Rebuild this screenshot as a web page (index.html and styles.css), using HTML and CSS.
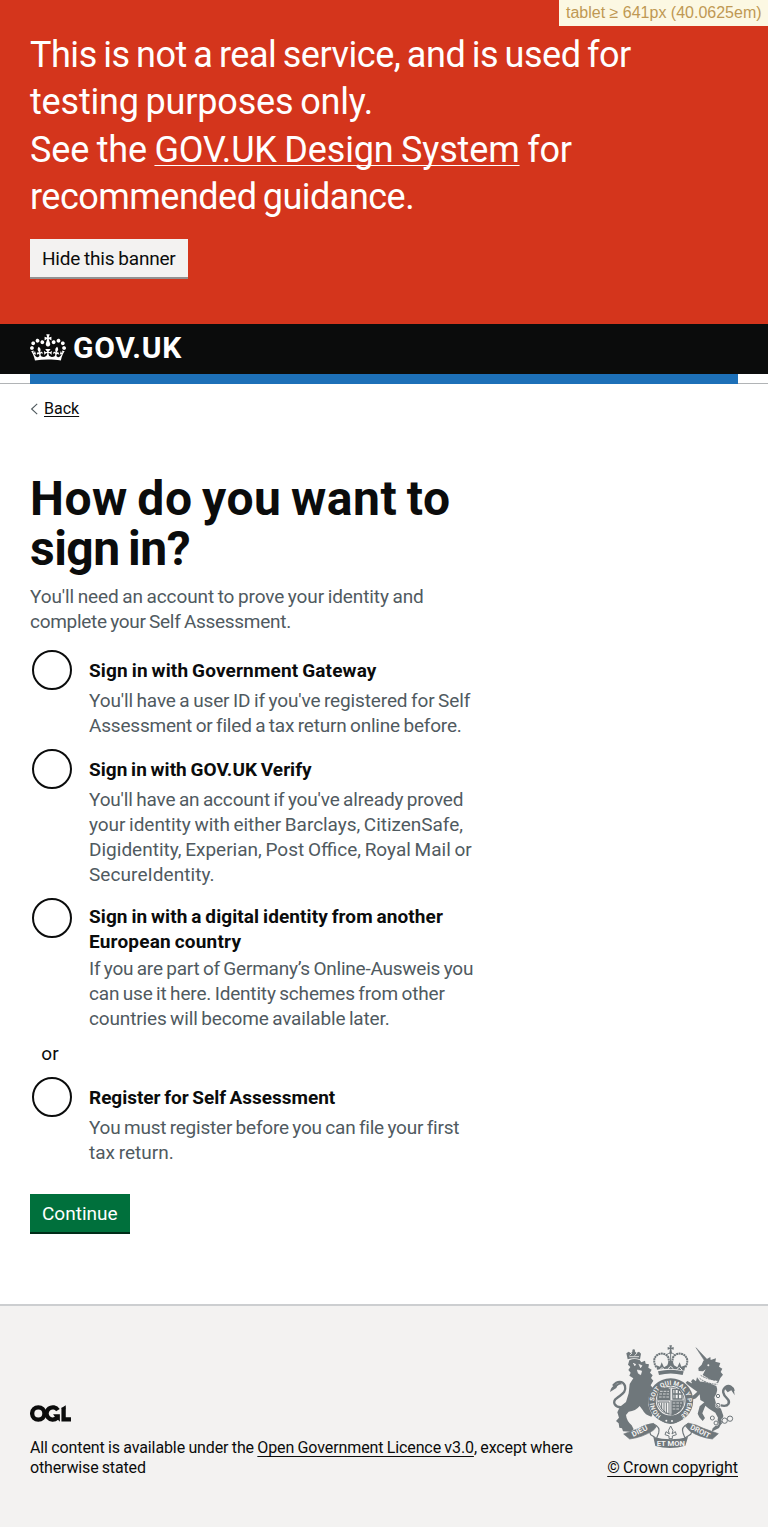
FILE: index.html
```
<!DOCTYPE html>
<html lang="en">
<head>
<meta charset="utf-8">
<title>How do you want to sign in?</title>
<link rel="stylesheet" href="styles.css">
</head>
<body>
<div class="breakpoint">tablet ≥ 641px (40.0625em)</div>
<section class="banner">
  <p class="banner-text"><span class="ln b1">This is not a real service, and is used for</span> <span class="ln b2">testing purposes only.</span> <span class="ln b3">See the <a href="#">GOV.UK Design System</a> for</span> <span class="ln b4">recommended guidance.</span></p>
  <button class="button button-secondary">Hide this banner</button>
</section>
<header class="header">
  <a class="logo" href="#">
    <svg class="crown" viewBox="0 0 132 97" width="36" height="27" aria-hidden="true"><path fill="currentColor" d="M25 30.2c3.5 1.5 7.7-.2 9.1-3.7 1.5-3.6-.2-7.8-3.9-9.2-3.6-1.4-7.6.3-9.1 3.9-1.4 3.5.3 7.5 3.9 9zM9 39.5c3.6 1.5 7.8-.2 9.2-3.7 1.5-3.6-.2-7.8-3.9-9.1-3.6-1.5-7.6.2-9.1 3.8-1.4 3.5.3 7.5 3.8 9zM4.4 57.2c3.5 1.5 7.7-.2 9.1-3.8 1.5-3.6-.2-7.7-3.9-9.1-3.5-1.5-7.6.3-9.1 3.8-1.4 3.5.3 7.6 3.9 9.1zm38.3-21.4c3.5 1.5 7.7-.2 9.1-3.8 1.5-3.6-.2-7.7-3.9-9.1-3.6-1.5-7.6.3-9.1 3.8-1.3 3.6.4 7.7 3.9 9.1zm64.4-5.6c-3.6 1.5-7.8-.2-9.1-3.7-1.5-3.6.2-7.8 3.8-9.2 3.6-1.4 7.7.3 9.2 3.9 1.3 3.5-.4 7.5-3.9 9zm15.9 9.3c-3.6 1.5-7.7-.2-9.1-3.7-1.5-3.6.2-7.8 3.7-9.1 3.6-1.5 7.7.2 9.2 3.8 1.5 3.5-.3 7.5-3.8 9zm4.7 17.7c-3.6 1.5-7.8-.2-9.2-3.8-1.5-3.6.2-7.7 3.9-9.1 3.6-1.5 7.7.3 9.2 3.8 1.3 3.5-.4 7.6-3.9 9.1zM89.3 35.8c-3.6 1.5-7.8-.2-9.2-3.8-1.4-3.6.2-7.7 3.9-9.1 3.6-1.5 7.7.3 9.2 3.8 1.4 3.6-.3 7.7-3.9 9.1zM69.7 17.7l8.9 4.7V9.3l-8.9 2.8c-.2-.3-.5-.6-.9-.9L72.4 0H59.6l3.5 11.2c-.3.3-.6.5-.9.9l-8.8-2.8v13.1l8.8-4.7c.3.3.6.7.9.9l-5 15.4v.1c-.2.8-.4 1.6-.4 2.4 0 4.1 3.1 7.5 7 8.1h.2c.3 0 .7.1 1 .1.4 0 .7 0 1-.1h.2c4-.6 7.1-4.1 7.1-8.1 0-.8-.1-1.7-.4-2.4V34l-5.1-15.4c.4-.2.7-.6 1-.9zM66 92.8c16.9 0 32.8 1.1 47.1 3.2 4-16.9 8.9-26.7 14-33.5l-9.6-3.4c1 4.9 1.1 7.2 0 10.2-1.5-1.4-3-4.3-4.2-8.7L108.6 76c2.8-2 5-3.2 7.5-3.3-4.4 9.4-10 11.9-13.6 11.2-4.3-.8-6.3-4.6-5.6-7.9 1-4.7 5.7-5.9 8-.5 4.3-8.7-3-11.4-7.6-8.8 7.1-7.2 7.9-13.5 2.1-21.1-8 6.1-8.1 12.3-4.5 20.8-4.7-5.4-12.1-2.5-9.5 6.2 3.4-5.2 7.9-2 7.2 3.1-.6 4.3-6.4 7.8-13.5 7.2-10.3-.9-10.9-8-11.2-13.8 2.5-.5 7.1 1.8 11 7.3L80.2 60c-4.1 4.4-8 5.3-12.3 5.4 1.4-4.4 8-11.6 8-11.6H55.5s6.4 7.2 7.9 11.6c-4.2-.1-8-1-12.3-5.4l1.4 16.4c3.9-5.5 8.5-7.7 10.9-7.3-.3 5.8-.9 12.8-11.1 13.8-7.2.6-12.9-2.9-13.5-7.2-.7-5 3.8-8.3 7.1-3.1 2.7-8.7-4.6-11.6-9.4-6.2 3.7-8.5 3.6-14.7-4.6-20.8-5.8 7.6-5 13.9 2.2 21.1-4.7-2.6-11.9.1-7.7 8.8 2.3-5.5 7.1-4.2 8.1.5.7 3.3-1.3 7.1-5.7 7.9-3.5.7-9-1.8-13.5-11.2 2.5.1 4.7 1.3 7.5 3.3l-4.7-15.4c-1.2 4.4-2.7 7.2-4.3 8.7-1.1-3-.9-5.3 0-10.2l-9.5 3.4c5 6.9 9.9 16.7 14 33.5 14.8-2.1 30.8-3.2 47.7-3.2z"/></svg>
    <span class="wordmark">GOV.UK</span>
  </a>
</header>
<div class="blue-rule"></div>
<main class="main">
  <a class="back" href="#"><svg width="8" height="12" viewBox="0 0 8 12" aria-hidden="true"><path d="M7.2 .8 1.6 6 7.2 11.2" fill="none" stroke="#505a5f" stroke-width="1.1"/></svg><span>Back</span></a>
  <form class="form">
    <h1 class="title"><span class="ln h1">How do you want to</span> <span class="ln h2">sign in?</span></h1>
    <p class="hint intro"><span class="ln i1">You'll need an account to prove your identity and</span> <span class="ln i2">complete your Self Assessment.</span></p>
    <div class="radio r1"><i class="dot"></i><div class="radio-body"><b class="label"><span class="ln l1">Sign in with Government Gateway</span></b>
      <p class="hint"><span class="ln a1">You'll have a user ID if you've registered for Self</span> <span class="ln a2">Assessment or filed a tax return online before.</span></p></div></div>
    <div class="radio r2"><i class="dot"></i><div class="radio-body"><b class="label"><span class="ln l2">Sign in with GOV.UK Verify</span></b>
      <p class="hint"><span class="ln a3">You'll have an account if you've already proved</span> <span class="ln a4">your identity with either Barclays, CitizenSafe,</span> <span class="ln a5">Digidentity, Experian, Post Office, Royal Mail or</span> <span class="ln a6">SecureIdentity.</span></p></div></div>
    <div class="radio r3"><i class="dot"></i><div class="radio-body"><b class="label"><span class="ln l3">Sign in with a digital identity from another</span> <span class="ln l4">European country</span></b>
      <p class="hint"><span class="ln a7">If you are part of Germany’s Online-Ausweis you</span> <span class="ln a8">can use it here. Identity schemes from other</span> <span class="ln a9">countries will become available later.</span></p></div></div>
    <div class="divider">or</div>
    <div class="radio r4"><i class="dot"></i><div class="radio-body"><b class="label"><span class="ln l5">Register for Self Assessment</span></b>
      <p class="hint"><span class="ln a10">You must register before you can file your first</span> <span class="ln a11">tax return.</span></p></div></div>
    <button class="button button-primary" type="button">Continue</button>
  </form>
</main>
<footer class="footer">
  <div class="licence">
    <svg class="ogl" viewBox="0 0 483.2 195.7" width="41" height="17" aria-hidden="true"><g fill="none" stroke="#0b0c0c" stroke-width="51"><circle cx="97.8" cy="97.8" r="72.5"/><path d="M329 59A72.500 72.500 0 1 0 318 150"/><path d="M396 30V168H483"/></g><path fill="#0b0c0c" d="M272 106h80v87h-3l-58-60zM370.500 34l51-34v40h-51z"/></svg>
    <p class="licence-text"><span class="ln f1">All content is available under the <a href="#">Open Government Licence v3.0</a>, except where</span> <span class="ln f2">otherwise stated</span></p>
  </div>
  <a class="copyright" href="#">
    <svg class="crest" viewBox="54 27 384 315" width="128" height="105" aria-hidden="true">
      <defs><path id="garter" d="M215 242A50 50 0 1 1 270 242"/></defs>
      <!-- lion -->
      <g fill="#6f777b">
        <path d="M113 73 109 55 116 50 123 55 131 45 139 54 147 50 153 56 150 73Q132 67 113 73z"/>
        <path d="M118 76Q132 69 149 75L154 82 165 77 167 86 177 88 175 98 185 104 180 113 188 121 183 129 190 137 182 151 190 161 187 176Q170 197 177 216L189 236 184 245Q165 240 158 225L149 213Q137 228 116 230L108 240Q110 258 125 271L131 283 121 290 99 289 96 280 88 278 86 265 78 258 87 248 82 232 90 215 108 201 116 175 119 147 130 130 118 122 122 113 115 105 121 96 114 89z"/>
        <path d="M188 170 197 185 190 197 199 205 183 213 170 200z"/>
      </g>
      <path d="M101 216C73 221 65 199 80 190 94 178 110 173 105 153 99 136 81 137 69 152" fill="none" stroke="#6f777b" stroke-width="7"/>
      <path d="M60 171Q61 154 82 146 93 140 96 148 83 148 79 159 72 164 60 171z" fill="#6f777b"/>
      <path d="M129 85 137 88 134 93M146 88 156 92 151 99M142 105 155 108 152 119 145 115z" fill="#f3f2f1" stroke="#f3f2f1" stroke-width="2"/>
      <path d="M118 65h29M119 61l7-7M134 62l7-8" stroke="#f3f2f1" stroke-width="2.500"/>
      <circle cx="131" cy="47" r="4" fill="#6f777b"/>
      <!-- unicorn -->
      <g fill="#6f777b">
        <path d="M318 38 351 73 344 78z" stroke="#6f777b" stroke-width="1.500"/>
        <path d="M352 71 361 66 362 75 378 70 376 80 391 84 387 95 397 101 392 111 399 119 391 129 384 145Q361 134 338 120L347 103 339 109 326 108 325 99 335 89 340 77z"/>
        <path d="M321 140Q340 137 379 153 386 168 373 187L378 205 393 222 400 242 396 262 387 279 365 290 368 280 380 269 384 248 376 233 357 221 346 212 337 235 345 249 338 258 328 247 323 236 329 214 343 202 331 195 329 178 321 185 312 179 322 170 311 163 294 150 287 143 292 138 305 145z"/>
        <path d="M303 139 309 132 318 139 321 127 330 139 324 154 311 153zM311 180 303 185 298 194 305 195 318 190 329 177z"/>
      </g>
      <path d="M392 211C418 217 422 200 411 190 398 178 395 165 407 156 417 149 428 155 431 168" fill="none" stroke="#6f777b" stroke-width="7"/>
      <path d="M403 160Q415 143 431 160L434 181 424 166 413 172z" fill="#6f777b"/>
      <path d="M332 124Q353 138 382 139" fill="none" stroke="#f3f2f1" stroke-width="5"/>
      <path d="M332 121Q353 134 382 136M329 130Q350 147 382 148" fill="none" stroke="#6f777b" stroke-width="3" stroke-dasharray="6 2"/>
      <circle cx="355" cy="91" r="3" fill="#f3f2f1"/>
      <g fill="none" stroke="#f3f2f1" stroke-width="5"><circle cx="384" cy="211" r="6"/><circle cx="367" cy="249" r="6"/><circle cx="378" cy="264" r="6"/><circle cx="404" cy="257" r="8"/></g>
      <g fill="none" stroke="#6f777b" stroke-width="3"><circle cx="384" cy="183" r="5"/><circle cx="384" cy="211" r="6"/><circle cx="367" cy="249" r="6"/><circle cx="378" cy="264" r="6"/><circle cx="404" cy="257" r="8"/><circle cx="420" cy="251" r="8"/><circle cx="391" cy="262" r="5"/></g>
      <!-- crown -->
      <g fill="#6f777b">
        <path d="M238 31h8l-2 7 7-2v8l-7-2 2 13h-8l2-13-7 2v-8l7 2z"/>
        <path d="M201 104 199 91 210 95 215 82 222 97 232 91 235 82 242 74 249 82 252 91 262 97 269 82 274 95 286 91 283 107Q242 97 201 104z"/>
        <path d="M204 109Q242 99 281 109L278 120Q242 111 207 120z"/>
      </g>
      <g fill="none" stroke="#6f777b" stroke-width="6" stroke-dasharray="6 1.500"><path d="M199 97C177 62 218 42 235 67L238 83M286 97C307 62 266 42 249 67L246 83"/></g>
      <path d="M242 52v29M230 59Q242 49 254 59M207 114Q242 105 278 114" fill="none" stroke="#6f777b" stroke-width="3"/>
      <path d="M208 105l8-7 8 6M260 104l8-7 8 8M234 101l8-7 8 7" fill="none" stroke="#f3f2f1" stroke-width="3"/>
      <!-- shield and garter -->
      <circle cx="242" cy="200" r="67" fill="#f3f2f1"/>
      <circle cx="242" cy="197" r="56" fill="none" stroke="#6f777b" stroke-width="23"/>
      <circle cx="242" cy="197" r="41" fill="#f3f2f1" stroke="#6f777b" stroke-width="2.500"/>
      <path d="M208 163Q224 153 240 161V195H203V178zM244 195H281Q281 216 270 228 257 239 244 242z" fill="#6f777b"/>
      <path d="M210 169h27M208 177h29M207 186h30M248 204h28M248 213h25M248 222h20" stroke="#d2d4d4" stroke-width="3" stroke-dasharray="8 3"/>
      <path d="M248 163h20l8 12v17h-27zM255 164v26M265 164v26M248 177h28" fill="none" stroke="#6f777b" stroke-width="4"/>
      <path d="M206 201h31v36Q213 229 206 201M215 203v20M222 203v27M229 203v30" fill="none" stroke="#6f777b" stroke-width="3"/>
      <path d="M242 153v89M202 197h80" stroke="#a9aeb0" stroke-width="3"/>
      <text class="motto garter-text"><textPath href="#garter" textLength="255" lengthAdjust="spacing">HONI SOIT QUI MAL Y PENSE</textPath></text>
      <path d="M214 239Q242 258 272 238L278 251Q242 282 206 252z" fill="#6f777b"/>
      <g fill="#f3f2f1"><circle cx="229" cy="257" r="3"/><circle cx="246" cy="258" r="3"/></g>
      <!-- motto ribbon -->
      <path d="M190 265Q162 269 145 281L101 297 119 312Q158 307 190 286L199 275zM294 264Q321 269 340 280L385 296 367 312Q328 307 298 287L287 274z" fill="#6f777b" stroke="#6f777b" stroke-width="2"/>
      <path d="M191 278Q175 287 182 299 190 303 196 308M295 278Q309 287 302 298 294 303 286 308M190 266Q212 276 206 294L200 309M294 266Q272 276 279 294L285 309" fill="none" stroke="#6f777b" stroke-width="3.500"/>
      <path d="M190 306Q242 320 294 306L286 332Q242 346 196 333z" fill="#6f777b"/>
      <path d="M242 273 249 287 246 297 256 290 259 299 247 303 247 311 237 311 237 303 225 299 228 290 238 297 235 287z" fill="none" stroke="#6f777b" stroke-width="3"/>
      <text class="motto" x="130" y="306" textLength="50" lengthAdjust="spacingAndGlyphs" transform="rotate(-27 130 306)">DIEU</text>
      <text class="motto" x="200" y="332" textLength="85" lengthAdjust="spacingAndGlyphs">ET MON</text>
      <text class="motto" x="299" y="281" textLength="64" lengthAdjust="spacingAndGlyphs" transform="rotate(27 299 281)">DROIT</text>
    </svg>
    <span>© Crown copyright</span>
  </a>
</footer>
</body>
</html>
```
FILE: styles.css
```
* { box-sizing: border-box; }
body { margin: 0; font-family: Roboto, "Liberation Sans", sans-serif; font-size: 19px; line-height: 25px; word-spacing: -1px; color: #0b0c0c; background: #fff; }
p, h1 { margin: 0; }
a { color: inherit; }
.ln { display: block; width: max-content; white-space: nowrap; }
.breakpoint { position: absolute; top: 0; right: 0; width: 209px; height: 26px; padding: 0 0 0 7px; font: 16px/25px "Liberation Sans", sans-serif; word-spacing: 0; color: #bf9853; background: #fcf8e3; }
.banner { height: 324px; padding: 32px 30px 0; background: #d4351c; color: #fff; }
.banner-text { font-size: 36px; line-height: 47.37px; word-spacing: -2px; }
.b1 { letter-spacing: -.47px; }
.b2 { letter-spacing: -.18px; }
.b3 { letter-spacing: -.16px; word-spacing: -1.2px; }
.b4 { letter-spacing: -.52px; }
.banner a, .copyright, .licence a { text-underline-offset: 3px; text-decoration-thickness: 1px; text-decoration-skip-ink: none; }
.button { display: block; height: 38px; padding: 0 12px; border: 0; font: 19px/40px Roboto, sans-serif; text-align: left; white-space: nowrap; }
.button-secondary { width: 158px; margin-top: 17px; letter-spacing: -.2px; word-spacing: -.6px; background: #f3f2f1; color: #0b0c0c; box-shadow: 0 2px 0 #929191; }
.button-primary { width: 100px; margin-top: 29px; background: #00703c; color: #fff; box-shadow: 0 2px 0 #002d18; }
.header { height: 50px; padding: 10px 30px 0; background: #0b0c0c; color: #fff; }
.logo { display: flex; gap: 7px; color: #fff; text-decoration: none; }
.wordmark { font: bold 30px/28px Roboto, sans-serif; letter-spacing: .7px; }
.blue-rule { height: 10px; border-bottom: 1px solid #b1b4b6; padding: 0 30px; }
.blue-rule::before { content: ""; display: block; height: 10px; background: #1d70b8; }
.main { height: 920px; padding: 15px 30px 0; }
.back { display: flex; align-items: center; gap: 6px; font-size: 16px; line-height: 20px; text-decoration: none; }
.back span { text-decoration: underline 1px; text-underline-offset: 2px; }
.title { margin-top: 55px; font-size: 48px; line-height: 50px; word-spacing: -3px; }
.h1 { letter-spacing: .55px; }
.h2 { letter-spacing: -.5px; }
.hint { color: #505a5f; }
.intro { margin-top: 10px; }
.i1 { letter-spacing: -.1px; }
.i2 { letter-spacing: -.29px; }
.form { width: 470px; }
.radio { display: flex; gap: 17px; padding-left: 2px; }
.dot { flex: none; width: 40px; height: 40px; border: 2px solid #0b0c0c; border-radius: 50%; }
.label { display: block; padding-top: 8px; }
.l1 { letter-spacing: .15px; }
.l2 { letter-spacing: .03px; }
.l3 { letter-spacing: .09px; }
.l4 { letter-spacing: .19px; }
.l5 { letter-spacing: -.03px; }
.a1 { letter-spacing: -.13px; }
.a2 { letter-spacing: -.2px; }
.a3 { letter-spacing: -.17px; }
.a4 { letter-spacing: -.04px; }
.a6 { letter-spacing: .07px; }
.a7 { letter-spacing: -.23px; }
.a8 { letter-spacing: -.18px; }
.a9 { letter-spacing: -.15px; }
.a10 { letter-spacing: -.22px; }
.radio-body .hint { margin-top: 5px; }
.r1 { margin-top: 16px; }
.r2, .r3 { margin-top: 11px; }
.radio.r3 .label { padding-top: 6px; }
.radio.r3 .hint { margin-top: 2px; }
.divider { width: 40px; margin-top: 10px; text-align: center; }
.r4 { margin-top: 11px; }
.footer { display: flex; justify-content: space-between; height: 223px; padding: 38px 30px 0; border-top: 2px solid #ccced0; background: #f3f2f1; font-size: 16px; line-height: 20px; word-spacing: -.6px; }
.licence { padding-top: 61px; }
.ogl { display: block; }
.licence-text { margin-top: 16px; }
.f1 { letter-spacing: -.11px; word-spacing: -.5px; }
.f2 { letter-spacing: -.15px; }
.copyright { letter-spacing: -.03px; }
.crest { display: block; margin: 0 2px 9px auto; }
.motto { font: bold 22px Roboto, sans-serif; letter-spacing: 0; word-spacing: 0; fill: #f3f2f1; }
.garter-text { font-size: 19px; }
```
